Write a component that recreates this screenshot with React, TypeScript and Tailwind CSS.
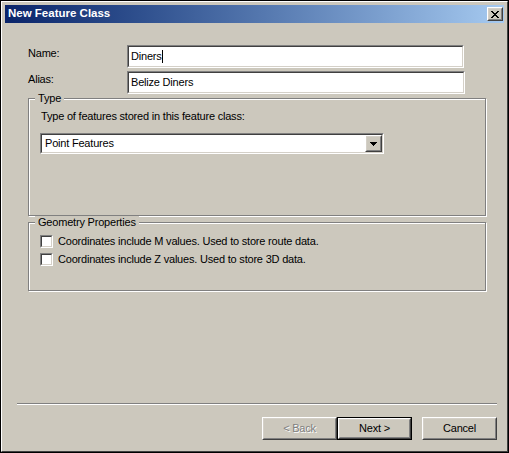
import type { ReactNode } from 'react'

const panel = 'bg-[#ccc8bd]'

function Sunken({ className = '', children }: { className?: string; children?: ReactNode }) {
  return (
    <div className={`border border-t-[#808080] border-l-[#808080] border-r-white border-b-white ${className}`}>
      <div className="h-full border border-t-[#404040] border-l-[#404040] border-r-[#d4d0c8] border-b-[#d4d0c8] bg-white flex items-center">
        {children}
      </div>
    </div>
  )
}

function Raised({ className = '', children }: { className?: string; children?: ReactNode }) {
  return (
    <div className={`border border-t-white border-l-white border-r-[#404040] border-b-[#404040] ${className}`}>
      <div className={`h-full border border-t-[#d4d0c8] border-l-[#d4d0c8] border-r-[#808080] border-b-[#808080] ${panel} flex items-center justify-center`}>
        {children}
      </div>
    </div>
  )
}

function GroupBox({ title, className = '', children }: { title: string; className?: string; children?: ReactNode }) {
  return (
    <div className={`relative w-[458px] border border-[#808080] shadow-[inset_1px_1px_0_#fff,1px_1px_0_#fff] ${className}`}>
      <span className={`absolute left-[6px] top-[-7px] px-[3px] leading-[13px] ${panel}`}>{title}</span>
      {children}
    </div>
  )
}

function Checkbox({ label }: { label: string }) {
  return (
    <div className="flex items-center h-[13px]">
      <Sunken className="w-[13px] h-[13px]" />
      <span className="ml-[5px] leading-[13px]">{label}</span>
    </div>
  )
}

export default function App() {
  return (
    <div className="w-[509px] h-[453px] bg-black p-px font-['Liberation_Sans',Arial,sans-serif] text-[11px] tracking-[-0.2px] text-black">
      <div className={`h-full border border-t-white border-l-white border-r-[#404040] border-b-[#404040] ${panel} p-[3px] flex flex-col`}>
        {/* title bar */}
        <div className="h-[18px] shrink-0 flex items-center justify-between bg-gradient-to-r from-[#0a246a] to-[#a6caf0] pl-[3px] pr-[1px]">
          <span className="text-white font-bold text-[11.5px] tracking-normal leading-none">New Feature Class</span>
          <Raised className="w-[16px] h-[14px]">
            <svg width="8" height="7" viewBox="0 0 8 7" shapeRendering="crispEdges">
              <path d="M0 0h2l2 2.5L6 0h2L5 3.5 8 7H6L4 4.5 2 7H0l3-3.5z" fill="#000" />
            </svg>
          </Raised>
        </div>

        <div className="flex-1 flex flex-col">
          <div className="pl-[23px] pt-[22px] flex flex-col">
            <div className="flex items-start">
              <span className="w-[99px] mt-[2px] leading-[13px]">Name:</span>
              <Sunken className="w-[337px] h-[23px]">
                <span className="pl-[2px] leading-[13px]">Diners</span>
                <span className="w-px h-[13px] bg-black" />
              </Sunken>
            </div>
            <div className="flex items-start mt-[3px]">
              <span className="w-[99px] mt-[2px] leading-[13px]">Alias:</span>
              <Sunken className="w-[338px] h-[23px]">
                <span className="pl-[2px] leading-[13px]">Belize Diners</span>
              </Sunken>
            </div>

            <GroupBox title="Type" className="mt-[4px] h-[118px] pt-[11px] pl-[11px]">
              <p className="leading-[13px] pl-px">Type of features stored in this feature class:</p>
              <Sunken className="mt-[10px] w-[344px] h-[21px]">
                <span className="flex-1 pl-[3px] leading-[13px]">Point Features</span>
                <Raised className="w-[17px] h-full">
                  <svg width="7" height="4" viewBox="0 0 7 4" shapeRendering="crispEdges">
                    <polygon points="0,0 7,0 3.5,4" fill="#000" />
                  </svg>
                </Raised>
              </Sunken>
            </GroupBox>

            <GroupBox title="Geometry Properties" className="mt-[6px] h-[69px] pt-[12px] pl-[11px] flex flex-col gap-[5px]">
              <Checkbox label="Coordinates include M values. Used to store route data." />
              <Checkbox label="Coordinates include Z values. Used to store 3D data." />
            </GroupBox>
          </div>

          <div className="mt-auto ml-[12px] mr-[7px] mb-[8px] flex flex-col">
            <div className="h-[2px] border-t border-t-[#808080] border-b border-b-white" />
            <div className="mt-[12px] flex justify-end">
              <Raised className="w-[75px] h-[23px]">
                <span className="text-[#808080] [text-shadow:1px_1px_0_#fff]">&lt; Back</span>
              </Raised>
              <div className="w-[75px] h-[23px] border border-black">
                <Raised className="h-full">
                  <span>Next &gt;</span>
                </Raised>
              </div>
              <Raised className="ml-[10px] w-[75px] h-[23px]">
                <span>Cancel</span>
              </Raised>
            </div>
          </div>
        </div>
      </div>
    </div>
  )
}
